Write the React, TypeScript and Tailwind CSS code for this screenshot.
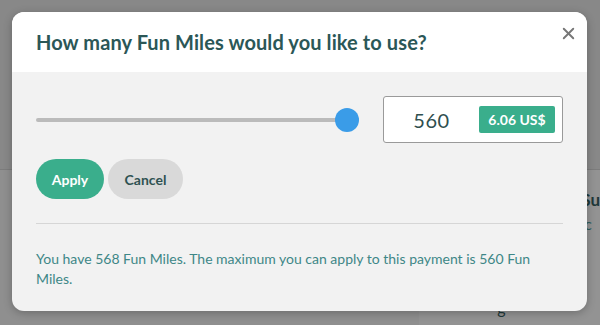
import { X } from "lucide-react";

export default function App() {
  return (
    <div className="relative h-[325px] w-[600px] overflow-hidden bg-[#8e8e8e] font-['Lato',sans-serif]">
      {/* page behind the overlay */}
      <div className="h-[170px] border-b border-[#7c7c7c] bg-[#888888]" />
      <div className="flex h-[155px]">
        <div className="w-[428px] bg-[#8f8f8f]" />
        <div className="flex-1 bg-[#939393] pt-[20px]">
          <div className="pl-[162px] text-[17px] font-bold leading-5 text-[#1e3838]">Su</div>
          <div className="mt-[4px] pl-[157px] text-[16px] leading-5 text-[#2f5d5d]">ac</div>
          <div className="mt-[64px] pl-[78px] text-[16px] leading-5 text-[#1e3838]">g</div>
        </div>
      </div>

      {/* modal */}
      <div className="absolute left-[12px] top-[12px] w-[575px] overflow-hidden rounded-[12px] bg-[#f2f2f2] shadow-[0_2px_8px_rgba(0,0,0,0.25)]">
        <div className="relative flex h-[60px] items-center bg-white px-6">
          <h2 className="text-[20px] font-bold tracking-[0.1px] text-[#2b5757]">
            How many Fun Miles would you like to use?
          </h2>
          <button className="absolute right-[9px] top-[12px] text-[#777777]">
            <X size={19} strokeWidth={2.4} />
          </button>
        </div>

        <div className="px-6 pb-[22px] pt-6">
          <div className="flex items-center gap-6">
            <div className="relative flex h-6 flex-1 items-center">
              <div className="h-[4px] w-full rounded-full bg-[#bbbbbb]" />
              <div className="absolute right-0 h-6 w-6 rounded-full bg-[#3a9ce8]" />
            </div>
            <div className="flex h-[47px] w-[180px] items-center rounded-[3px] border border-[#9a9a9a] bg-white pr-[7px]">
              <span className="flex-1 text-center text-[20px] tracking-[0.5px] text-[#2f4f4f]">560</span>
              <span className="flex h-[27px] w-[76px] items-center justify-center rounded-[2px] bg-[#3aae8c] text-[14px] font-bold text-white">
                6.06 US$
              </span>
            </div>
          </div>

          <div className="mt-4 flex gap-1">
            <button className="h-10 w-[68px] rounded-full bg-[#3aae8c] text-[14px] font-bold text-white">
              Apply
            </button>
            <button className="h-10 w-[75px] rounded-full bg-[#d9d9d9] text-[14px] font-bold text-[#2f5252]">
              Cancel
            </button>
          </div>

          <div className="mt-6 border-t border-[#d6d6d6]" />

          <p className="mt-[25px] text-[14px] leading-5 text-[#3e8787]">
            You have 568 Fun Miles. The maximum you can apply to this payment is 560 Fun Miles.
          </p>
        </div>
      </div>
    </div>
  );
}
